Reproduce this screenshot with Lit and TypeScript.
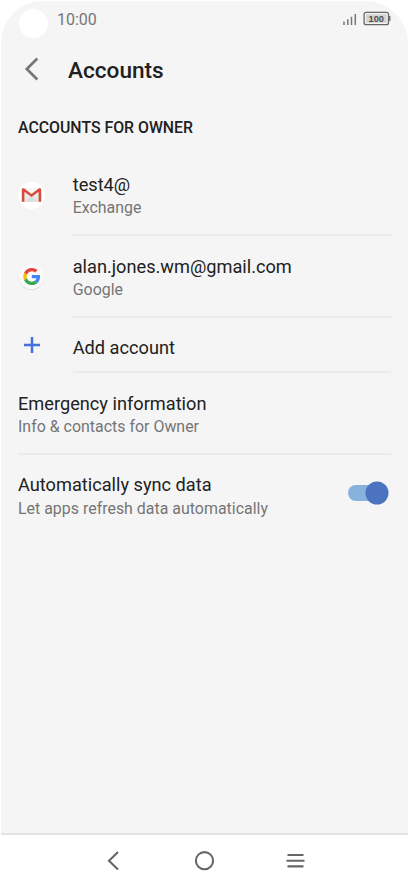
import { LitElement, html, svg, css } from "lit";
import { customElement, property } from "lit/decorators.js";

@customElement("status-bar")
class StatusBar extends LitElement {
  static styles = css`
    :host { display: flex; height: 39px; box-sizing: border-box; padding: 8px 17px 0 18px; align-items: flex-start; }
    .camera { width: 29px; height: 29px; border-radius: 50%; background: #fff; flex: none; }
    .time { margin-left: 9px; padding-top: 1px; font-size: 16px; line-height: 20px; color: #757575; flex: 1; }
    svg { display: block; flex: none; margin-top: 1px; }
    .cap { fill: #4d4d4d; font: bold 9.6px "Liberation Sans", Arial, sans-serif; }
  `;
  render() {
    return html`
      <div class="camera"></div>
      <div class="time">10:00</div>
      <svg width="48" height="16" viewBox="0 0 48 16">
        <path d="M1 11.5v3.5M4.8 9.3v5.7M8.5 6.7v8.3M12.3 4v11" stroke="#777" stroke-width="1.5" />
        <rect x="21.1" y="2.3" width="24.4" height="12.4" rx="2" fill="#f5f5f5" stroke="#666" stroke-width="1.3" />
        <rect x="22.9" y="4.1" width="20.8" height="8.8" fill="#d4d4d4" />
        <rect x="46.1" y="6" width="1.3" height="5" fill="#666" />
        <text class="cap" x="25.6" y="12" textLength="15.4" lengthAdjust="spacingAndGlyphs">100</text>
      </svg>
    `;
  }
}

@customElement("setting-row")
class SettingRow extends LitElement {
  @property() heading = "";
  @property() detail = "";
  static styles = css`
    :host { display: flex; box-sizing: border-box; height: 81.7px; padding: 0 17px; }
    :host([compact]) { height: 55.3px; }
    .icon { width: 54.7px; flex: none; }
    :host([wide]) .icon { display: none; }
    .body { flex: 1; display: flex; align-items: flex-start; border-bottom: 2px solid #ebebeb; padding-top: 18.6px; box-sizing: border-box; }
    :host([last]) .body { border-bottom: 0; }
    .texts { flex: 1; white-space: nowrap; }
    .heading { font-size: 18.2px; line-height: 24px; color: #212121; }
    .detail { font-size: 15.95px; line-height: 20px; color: #757575; margin-top: 1.2px; }
  `;
  render() {
    return html`
      <div class="icon"><slot name="icon"></slot></div>
      <div class="body">
        <div class="texts">
          <div class="heading">${this.heading}</div>
          ${this.detail ? html`<div class="detail">${this.detail}</div>` : null}
        </div>
        <slot name="control"></slot>
      </div>
    `;
  }
}

const gmail = svg`
  <circle cx="13.5" cy="13.5" r="13.5" fill="#fff"/>
  <path d="M4 6.5h19v13.3H4z" fill="#e9e9e9"/>
  <path d="M5 6.5h17l-8.5 6.6z" fill="#f5f5f5"/>
  <path d="M6.5 19.8l7-6 7 6z" fill="#dedede"/>
  <path d="M3.8 7.7c0-1.7 1.5-1.9 2.5-1.1l7.2 5.4 7.2-5.4c1-.8 2.5-.6 2.5 1.1v12.1h-2.6V9.7l-7.1 5.3-7.1-5.3v10.1H3.8z" fill="#d54b3f"/>`;

const google = svg`
  <circle cx="13.5" cy="14.3" r="12.7" fill="#dcdcdc"/>
  <circle cx="13.5" cy="13.5" r="12.6" fill="#fafafa"/>
  <g transform="translate(5.2 4.9) scale(.358)">
    <path fill="#EA4335" d="M24 9.5c3.54 0 6.71 1.22 9.21 3.6l6.85-6.85C35.9 2.38 30.47 0 24 0 14.62 0 6.51 5.38 2.56 13.22l7.98 6.19C12.43 13.72 17.74 9.5 24 9.5z"/>
    <path fill="#4285F4" d="M46.98 24.55c0-1.57-.15-3.09-.38-4.55H24v9.02h12.94c-.58 2.96-2.26 5.48-4.78 7.18l7.73 6c4.51-4.18 7.09-10.36 7.09-17.65z"/>
    <path fill="#FBBC05" d="M10.53 28.59A14.5 14.5 0 0 1 9.77 24c0-1.6.27-3.14.76-4.59l-7.98-6.19A23.9 23.9 0 0 0 0 24c0 3.88.92 7.54 2.56 10.78l7.97-6.19z"/>
    <path fill="#34A853" d="M24 48c6.48 0 11.93-2.13 15.89-5.81l-7.73-6c-2.15 1.45-4.92 2.3-8.16 2.3-6.26 0-11.57-4.22-13.47-9.91l-7.98 6.19C6.51 42.62 14.62 48 24 48z"/>
  </g>`;

@customElement("app-root")
class AppRoot extends LitElement {
  static styles = css`
    :host { display: flex; flex-direction: column; height: 888px; background: #fff; font-family: Roboto, sans-serif; overflow: hidden; }
    .screen { height: 834px; box-sizing: border-box; margin: 1px 1px 0; background: #f5f5f5; border-radius: 42px 42px 0 0; border-bottom: 2px solid #e3e3e3; flex: none; }
    .header { display: flex; align-items: center; height: 60px; padding-left: 23px; }
    .header svg { width: 16px; height: 24px; flex: none; margin-top: -2px; }
    h1 { margin: 1px 0 0 28px; font-size: 22.6px; line-height: 28px; font-weight: 500; color: #212121; }
    h2 { margin: 0; height: 54.4px; padding: 18px 17px 0; box-sizing: border-box; font-size: 15.85px; line-height: 20px; font-weight: 500; color: #212121; white-space: nowrap; }
    .badge { display: block; width: 27px; height: 27px; margin-top: 27.2px; }
    .plus { display: block; width: 18px; height: 18px; margin: 18.2px 0 0 5px; }
    .switch { width: 41px; height: 24px; margin: 7.4px 2.2px 0 0; flex: none; }
    .nav { flex: 1; display: block; width: 409px; }
  `;
  render() {
    return html`
      <div class="screen">
        <status-bar></status-bar>
        <div class="header">
          <svg viewBox="0 0 16 24"><path d="M13.3 1.5L2.8 12l10.5 10.5" fill="none" stroke="#777" stroke-width="2.7"/></svg>
          <h1>Accounts</h1>
        </div>
        <h2>ACCOUNTS FOR OWNER</h2>
        <setting-row heading="test4@" detail="Exchange">
          <svg slot="icon" class="badge" viewBox="0 0 27 27">${gmail}</svg>
        </setting-row>
        <setting-row heading="alan.jones.wm@gmail.com" detail="Google">
          <svg slot="icon" class="badge" viewBox="0 0 27 27">${google}</svg>
        </setting-row>
        <setting-row compact heading="Add account">
          <svg slot="icon" class="plus" viewBox="0 0 18 18"><path d="M9 1v16M1 9h16" stroke="#456fe0" stroke-width="2.5"/></svg>
        </setting-row>
        <setting-row wide heading="Emergency information" detail="Info &amp; contacts for Owner"></setting-row>
        <setting-row wide last heading="Automatically sync data" detail="Let apps refresh data automatically">
          <svg slot="control" class="switch" viewBox="0 0 41 24">
            <rect x="0" y="4" width="34" height="16" rx="8" fill="#87b2dc"/>
            <circle cx="29" cy="12" r="11.5" fill="#4b73c0"/>
          </svg>
        </setting-row>
      </div>
      <svg class="nav" viewBox="0 0 409 53" fill="none" stroke="#666" stroke-width="2.1">
        <path d="M118 17l-9 8.8 9 8.8"/>
        <circle cx="204.5" cy="25.7" r="8.6"/>
        <path d="M287.5 20h16M286.5 25.7h18M287.5 31.4h16"/>
      </svg>
    `;
  }
}
